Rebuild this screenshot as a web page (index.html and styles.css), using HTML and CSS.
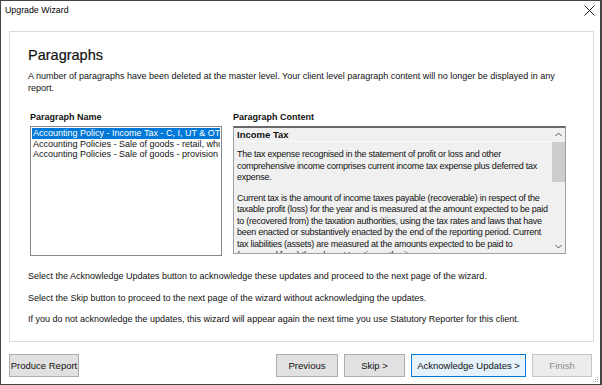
FILE: index.html
```html
<!DOCTYPE html>
<html>
<head>
  <title>Upgrade Wizard</title>
  <link rel="stylesheet" href="styles.css">
</head>
<body>
  <div class="window">
    <div class="titlebar">
      <span class="title">Upgrade Wizard</span>
      <svg class="close" width="11" height="11" viewBox="0 0 11 11">
        <path d="M0.5 0.5 L10.5 10.5 M10.5 0.5 L0.5 10.5" stroke="#222" stroke-width="1" fill="none"/>
      </svg>
    </div>

    <div class="panel">
      <h1>Paragraphs</h1>
      <p class="intro">A number of paragraphs have been deleted at the master level. Your client level paragraph content will no longer be displayed in any report.</p>

      <div class="columns">
        <div class="col-names">
          <div class="label">Paragraph Name</div>
          <div class="listbox">
            <div class="item selected">Accounting Policy - Income Tax - C, I, UT &amp; OT - Accounting Policy</div>
            <div class="item">Accounting Policies - Sale of goods - retail, wholesale</div>
            <div class="item">Accounting Policies - Sale of goods - provision for returns</div>
          </div>
        </div>
        <div class="col-content">
          <div class="label">Paragraph Content</div>
          <div class="textbox">
            <div class="text">
              <div class="heading">Income Tax</div>
              <p>The tax expense recognised in the statement of profit or loss and other<br>
                comprehensive income comprises current income tax expense plus deferred tax<br>
                expense.</p>
              <p>Current tax is the amount of income taxes payable (recoverable) in respect of the<br>
                taxable profit (loss) for the year and is measured at the amount expected to be paid<br>
                to (recovered from) the taxation authorities, using the tax rates and laws that have<br>
                been enacted or substantively enacted by the end of the reporting period. Current<br>
                tax liabilities (assets) are measured at the amounts expected to be paid to<br>
                (recovered from) the relevant taxation authority.</p>
            </div>
            <div class="scrollbar">
              <svg class="arrow" width="7" height="5" viewBox="0 0 7 5"><path d="M0.5 4 L3.5 1 L6.5 4" stroke="#555" fill="none"/></svg>
              <div class="track"><div class="thumb"></div></div>
              <svg class="arrow" width="7" height="5" viewBox="0 0 7 5"><path d="M0.5 1 L3.5 4 L6.5 1" stroke="#555" fill="none"/></svg>
            </div>
          </div>
        </div>
      </div>

      <div class="notes">
        <p>Select the Acknowledge Updates button to acknowledge these updates and proceed to the next page of the wizard.</p>
        <p>Select the Skip button to proceed to the next page of the wizard without acknowledging the updates.</p>
        <p>If you do not acknowledge the updates, this wizard will appear again the next time you use Statutory Reporter for this client.</p>
      </div>
    </div>

    <div class="buttons">
      <button class="btn btn-report">Produce Report</button>
      <div class="spacer"></div>
      <button class="btn btn-prev">Previous</button>
      <button class="btn btn-skip">Skip &gt;</button>
      <button class="btn btn-ack">Acknowledge Updates &gt;</button>
      <button class="btn btn-finish" disabled>Finish</button>
    </div>
    <svg class="grip" width="6" height="6" viewBox="0 0 6 6">
      <rect x="4" y="0" width="1" height="1" fill="#999"/>
      <rect x="2" y="2" width="1" height="1" fill="#999"/>
      <rect x="4" y="2" width="1" height="1" fill="#999"/>
      <rect x="0" y="4" width="1" height="1" fill="#999"/>
      <rect x="2" y="4" width="1" height="1" fill="#999"/>
      <rect x="4" y="4" width="1" height="1" fill="#999"/>
    </svg>
  </div>
</body>
</html>
```

FILE: styles.css
```css
body {
  margin: 0;
  background-color: #fff;
  font-family: "Liberation Sans", Arial, sans-serif;
  font-size: 9px;
  color: #111;
}

.window {
  position: relative;
  width: 599px;
  height: 383px;
  border: 1px solid #444;
  border-right-width: 2px;
  background-color: #fff;
  display: flex;
  flex-direction: column;
}

.titlebar {
  height: 18px;
  display: flex;
  align-items: center;
  justify-content: space-between;
  padding: 0 5px 0 4px;
}

.title {
  font-size: 8.8px;
  color: #000;
}

.panel {
  margin: 12px 6px 0 8px;
  height: 309px;
  border: 1px solid #dadada;
  padding: 0 0 0 18px;
}

h1 {
  font-family: "Liberation Sans", Arial, sans-serif;
  font-size: 14.5px;
  font-weight: normal;
  margin: 13px 0 0 0;
  height: 20px;
  line-height: 20px;
  -webkit-text-stroke: 0.2px #111;
}

.intro {
  margin: 5px 12px 0 0;
  line-height: 12px;
}

.columns {
  display: flex;
  margin-top: 17px;
  margin-left: 2px;
}

.label {
  font-weight: bold;
  height: 15px;
  line-height: 12px;
}

.col-names {
  width: 192px;
  margin-right: 11px;
}

.listbox {
  height: 126px;
  border: 1px solid #828790;
  background: #fff;
  overflow: hidden;
  padding: 1px;
}

.item {
  white-space: nowrap;
  overflow: hidden;
  line-height: 10.5px;
  height: 10.5px;
  padding-left: 1px;
}

.item.selected {
  background-color: #0078d7;
  color: #fff;
}

.col-content {
  width: 333px;
}

.textbox {
  height: 125px;
  border: 1px solid #a0a0a0;
  border-top: 2px solid #696969;
  background: #f0f0f0;
  display: flex;
  overflow: hidden;
}

.text {
  flex: 1;
  padding: 1px 0 0 3px;
  line-height: 11.5px;
  letter-spacing: -0.25px;
  white-space: nowrap;
  overflow: hidden;
}

.text .heading {
  font-weight: bold;
  font-size: 9.5px;
  letter-spacing: 0;
  height: 12px;
  border-bottom: 1px solid #fafafa;
}

.text p {
  margin: 7px 0 0 0;
}

.text p + p {
  margin-top: 9px;
}

.scrollbar {
  width: 13px;
  display: flex;
  flex-direction: column;
  align-items: center;
}

.scrollbar .arrow {
  margin: 4px 0;
}

.track {
  flex: 1;
  width: 100%;
}

.thumb {
  margin-top: 1px;
  height: 40px;
  background: #cdcdcd;
}

.notes {
  margin-top: 14px;
}

.notes p {
  margin: 0 0 9.5px 0;
  line-height: 12px;
}

.buttons {
  display: flex;
  align-items: center;
  padding: 12px 8px 0 8px;
  gap: 6px;
}

.spacer {
  flex: 1;
}

.btn {
  height: 23px;
  font-family: "Liberation Sans", Arial, sans-serif;
  font-size: 9.5px;
  color: #111;
  background: #e1e1e1;
  border: 1px solid #adadad;
  padding: 0;
}

.btn-report { width: 70px; }
.btn-prev { width: 62px; }
.btn-skip { width: 61px; }
.btn-ack {
  width: 115px;
  background: #e5f1fb;
  border-color: #0078d7;
}
.btn-finish {
  width: 60px;
  background: #ececec;
  border-color: #c6c6c6;
  color: #8d8d8d;
}

.grip {
  position: absolute;
  right: 1px;
  bottom: 1px;
}
```
